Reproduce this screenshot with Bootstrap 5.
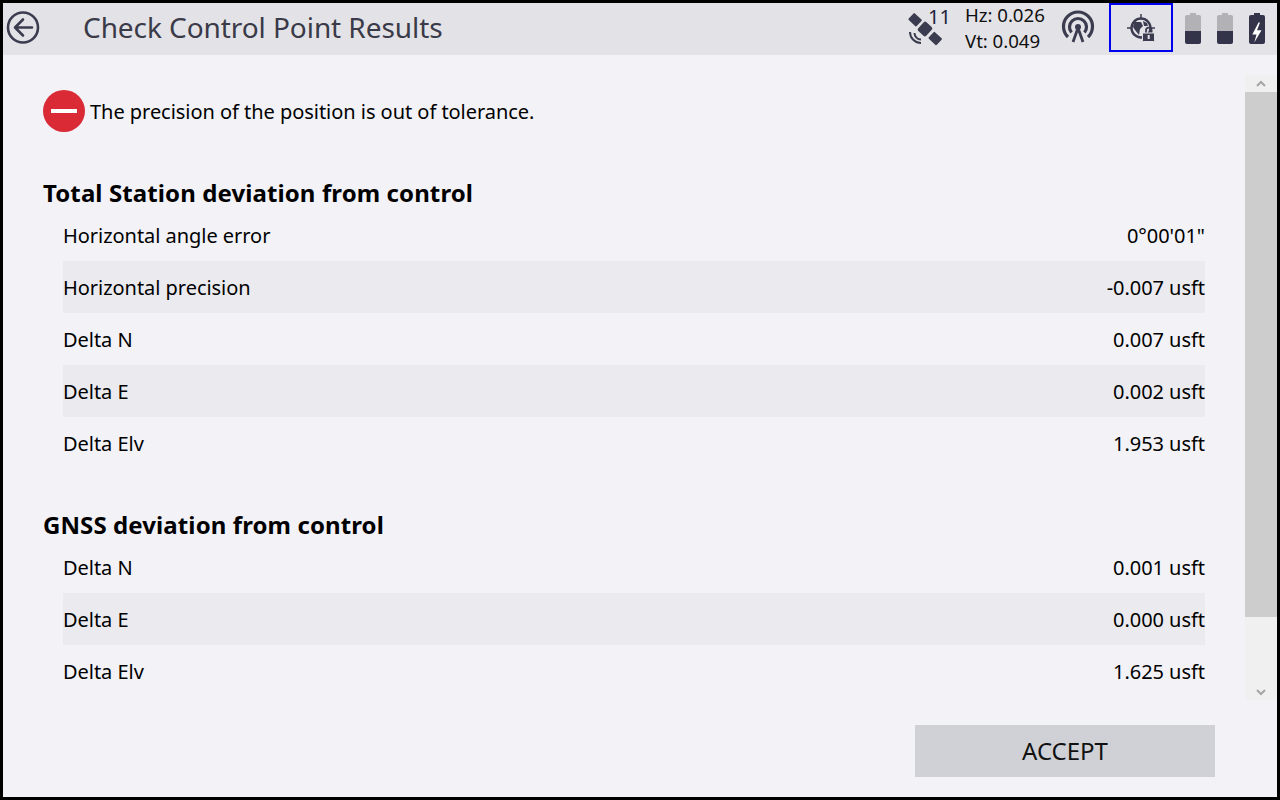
<!DOCTYPE html>
<html lang="en">
<head>
  <meta charset="UTF-8" />
  <title>Check Control Point Results</title>
  <link href="https://cdn.jsdelivr.net/npm/bootstrap@5.3.3/dist/css/bootstrap.min.css" rel="stylesheet">
  <style>
    html, body { height: 100%; }
    body {
      background-color: #000;
      color: #000;
      font-family: "Noto Sans", sans-serif;
      font-size: 20px;
      letter-spacing: -0.04px;
      overflow: hidden;
    }
    .app-frame {
      width: 1280px;
      height: 800px;
      border: 3px solid #000;
      background-color: #f2f2f7;
    }
    .top-bar { height: 52px; padding-bottom: 2px; background-color: #e3e3e7; flex: none; }
    .back-btn { width: 40px; height: 40px; }
    .page-title { font-size: 28px; font-weight: 400; color: #3a3a48; margin: 0 0 0 40px; letter-spacing: -0.07px; }
    .sat-icon { width: 40px; height: 40px; }
    .sat-count { font-size: 20px; line-height: 1; color: #22223a; margin: -22px 0 0 -18px; width: 37px; }
    .prec-box { font-size: 18.67px; line-height: 26px; margin-right: 12px; width: 84px; color: #111; }
    .gps-box { width: 64px; height: 49px; border: 2px solid #0000f0; margin: 0 12px; }
    .bat-last { margin-right: 12px; }
    .main-area { min-height: 0; }
    .content-col { width: 1242px; padding: 35px 40px 0 40px; flex: none; }
    .alert-line { height: 42px; }
    .alert-line svg { margin-right: 5px; }
    .alert-line span { padding-top: 2px; }
    .group-title { font-size: 24px; font-weight: 700; line-height: 32px; margin: 0; letter-spacing: 0.1px; }
    .data-row { height: 52px; margin-left: 20px; padding-top: 2px; }
    .data-row.shaded { background-color: #ebebef; }
    .title-first { margin-top: 45px; }
    .title-second { margin-top: 40px; }
    .scroll-track { width: 32px; height: 625px; margin-top: 20px; background-color: #f0f0f0; flex: none; }
    .scroll-arrow { height: 17px; }
    .scroll-thumb { height: 525px; background-color: #cdcdcd; }
    .scroll-rest { height: 83px; }
    .foot-area { height: 97px; flex: none; padding: 25px 62px 0 0; }
    .accept-btn {
      width: 300px;
      height: 52px;
      background-color: #d0d1d6;
      border: 0;
      border-radius: 0;
      font-size: 24px;
      color: #111;
    }
    .accept-btn:hover { background-color: #d0d1d6; color: #111; }
  </style>
</head>
<body>
  <div class="app-frame d-flex flex-column">
    <div class="top-bar d-flex align-items-center">
      <svg class="back-btn" viewBox="0 0 40 40" fill="none" stroke="#3c3c50" stroke-width="2.6">
        <circle cx="20" cy="19.500" r="15"/>
        <path d="M29 19.500H12M20 11.500l-8 8 8 8" stroke-linecap="round" stroke-linejoin="round"/>
      </svg>
      <h1 class="page-title flex-grow-1">Check Control Point Results</h1>
      <svg class="sat-icon" viewBox="0 0 40 40" fill="#3c3c50">
        <g transform="rotate(43 19 21)">
          <rect x="13.500" y="15" width="11" height="12" rx="2"/>
          <rect x="0" y="16.500" width="11" height="9" rx="1"/>
          <rect x="27.500" y="16.500" width="11" height="9" rx="1"/>
        </g>
        <path d="M4 24a11 11 0 0 0 11 11M8.500 25a6.500 6.500 0 0 0 6.500 6.500" fill="none" stroke="#3c3c50" stroke-width="2"/>
      </svg>
      <div class="sat-count">11</div>
      <div class="prec-box">
        <div>Hz: 0.026</div>
        <div>Vt: 0.049</div>
      </div>
      <svg width="36" height="40" viewBox="0 0 36 40" fill="none" stroke="#3c3c50" stroke-width="3.200">
        <path d="M7 29a14.500 14.500 0 1 1 20 0M10.500 24.500a8.500 8.500 0 1 1 13 0"/>
        <circle cx="17" cy="19" r="3" fill="#3c3c50" stroke="none"/>
        <path d="M17 20l-5 14M17 20l5 14" stroke-width="2.800"/>
      </svg>
      <div class="gps-box align-self-start d-flex align-items-center justify-content-center">
        <svg width="30" height="30" viewBox="0 0 30 30" fill="#3c3c50">
          <circle cx="15" cy="15" r="9.500" fill="none" stroke="#3c3c50" stroke-width="2.400"/>
          <path d="M15 1v5M1 15h5M24 15h5" stroke="#3c3c50" stroke-width="1.500"/>
          <path d="M8 9h7l2 4-3 3-1 6-4-5-2-3zM17 8l4 2 1 3h-4z"/>
          <path d="M20 20v-2.500a2.800 2.800 0 0 1 5.600 0V20" fill="none" stroke="#3c3c50" stroke-width="1.800"/>
          <rect x="16.500" y="20" width="12" height="8.500" rx="1" stroke="#e3e3e7" stroke-width="1"/>
          <rect x="21.700" y="22" width="2" height="4" fill="#e3e3e7"/>
        </svg>
      </div>
      <svg width="16" height="31" viewBox="0 0 16 31">
        <path d="M5 0h6v2h3a2 2 0 0 1 2 2v14H0V4a2 2 0 0 1 2-2h3z" fill="#b1b1b6"/>
        <path d="M0 18h16v11a2 2 0 0 1-2 2H2a2 2 0 0 1-2-2z" fill="#33334a"/>
      </svg>
      <svg class="ms-3" width="16" height="31" viewBox="0 0 16 31">
        <path d="M5 0h6v2h3a2 2 0 0 1 2 2v14H0V4a2 2 0 0 1 2-2h3z" fill="#b1b1b6"/>
        <path d="M0 18h16v11a2 2 0 0 1-2 2H2a2 2 0 0 1-2-2z" fill="#33334a"/>
      </svg>
      <svg class="ms-3 bat-last" width="16" height="31" viewBox="0 0 16 31">
        <path d="M5 0h6v2h3a2 2 0 0 1 2 2v25a2 2 0 0 1-2 2H2a2 2 0 0 1-2-2V4a2 2 0 0 1 2-2h3z" fill="#33334a"/>
        <path d="M9.500 9.500L3.300 21.500h4.200L5.300 29.500 12.500 17.300H8L11 9.500z" fill="#fff"/>
      </svg>
    </div>

    <div class="main-area d-flex flex-grow-1">
      <div class="content-col">
        <div class="alert-line d-flex align-items-center">
          <svg width="42" height="42" viewBox="0 0 42 42">
            <circle cx="21" cy="21" r="21" fill="#da2a36"/>
            <rect x="8" y="19" width="26" height="4" fill="#fff"/>
          </svg>
          <span>The precision of the position is out of tolerance.</span>
        </div>

        <h2 class="group-title title-first">Total Station deviation from control</h2>
        <div class="data-row d-flex align-items-center justify-content-between"><span>Horizontal angle error</span><span>0°00'01"</span></div>
        <div class="data-row shaded d-flex align-items-center justify-content-between"><span>Horizontal precision</span><span>-0.007 usft</span></div>
        <div class="data-row d-flex align-items-center justify-content-between"><span>Delta N</span><span>0.007 usft</span></div>
        <div class="data-row shaded d-flex align-items-center justify-content-between"><span>Delta E</span><span>0.002 usft</span></div>
        <div class="data-row d-flex align-items-center justify-content-between"><span>Delta Elv</span><span>1.953 usft</span></div>

        <h2 class="group-title title-second">GNSS deviation from control</h2>
        <div class="data-row d-flex align-items-center justify-content-between"><span>Delta N</span><span>0.001 usft</span></div>
        <div class="data-row shaded d-flex align-items-center justify-content-between"><span>Delta E</span><span>0.000 usft</span></div>
        <div class="data-row d-flex align-items-center justify-content-between"><span>Delta Elv</span><span>1.625 usft</span></div>
      </div>
      <div class="scroll-track">
        <div class="scroll-arrow d-flex align-items-center justify-content-center">
          <svg width="12" height="8" viewBox="0 0 12 8" fill="none" stroke="#a5a5a5" stroke-width="2"><path d="M2 6l4-4 4 4"/></svg>
        </div>
        <div class="scroll-thumb"></div>
        <div class="scroll-rest d-flex align-items-end justify-content-center pb-1">
          <svg width="12" height="8" viewBox="0 0 12 8" fill="none" stroke="#a5a5a5" stroke-width="2"><path d="M2 2l4 4 4-4"/></svg>
        </div>
      </div>
    </div>

    <div class="foot-area d-flex justify-content-end">
      <button type="button" class="btn accept-btn">ACCEPT</button>
    </div>
  </div>
  <script src="https://cdn.jsdelivr.net/npm/bootstrap@5.3.3/dist/js/bootstrap.bundle.min.js"></script>
</body>
</html>
